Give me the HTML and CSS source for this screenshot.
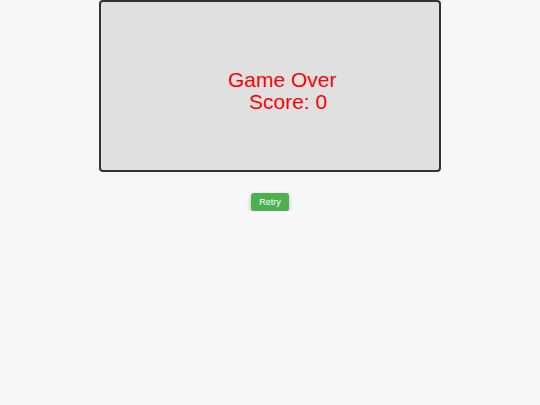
FILE: index.html
```html
<!DOCTYPE html>
<html>
<head>
<meta charset="utf-8">
<link rel="stylesheet" href="styles.css">
</head>
<body>
<div class="page">
  <div class="board">
    <div class="msg">
      <div class="line1">Game Over</div>
      <div class="line2">Score: 0</div>
    </div>
  </div>
  <button class="retry">Retry</button>
</div>
</body>
</html>
```
FILE: styles.css
```css
html, body {
  margin: 0;
  padding: 0;
  background: #f7f7f7;
  font-family: "Liberation Sans", Arial, sans-serif;
}
.page {
  display: flex;
  flex-direction: column;
  align-items: center;
  gap: 21px;
}
.board {
  box-sizing: border-box;
  width: 342px;
  height: 172px;
  border: 2px solid #333333;
  border-radius: 4px;
  background: #e0e0e0;
  padding-top: 67px;
}
.msg {
  color: #ff0000;
  font-size: 21px;
  line-height: 22px;
}
.line1 {
  margin-left: 127px;
}
.line2 {
  margin-left: 148px;
}
.retry {
  box-sizing: border-box;
  width: 38px;
  height: 18px;
  padding: 0;
  border: none;
  border-radius: 3px;
  background: #4caf50;
  color: #ffffff;
  font-family: "Liberation Sans", Arial, sans-serif;
  font-weight: normal;
  font-size: 9px;
  box-shadow: 0 2px 4px rgba(0, 0, 0, 0.25);
}
```
